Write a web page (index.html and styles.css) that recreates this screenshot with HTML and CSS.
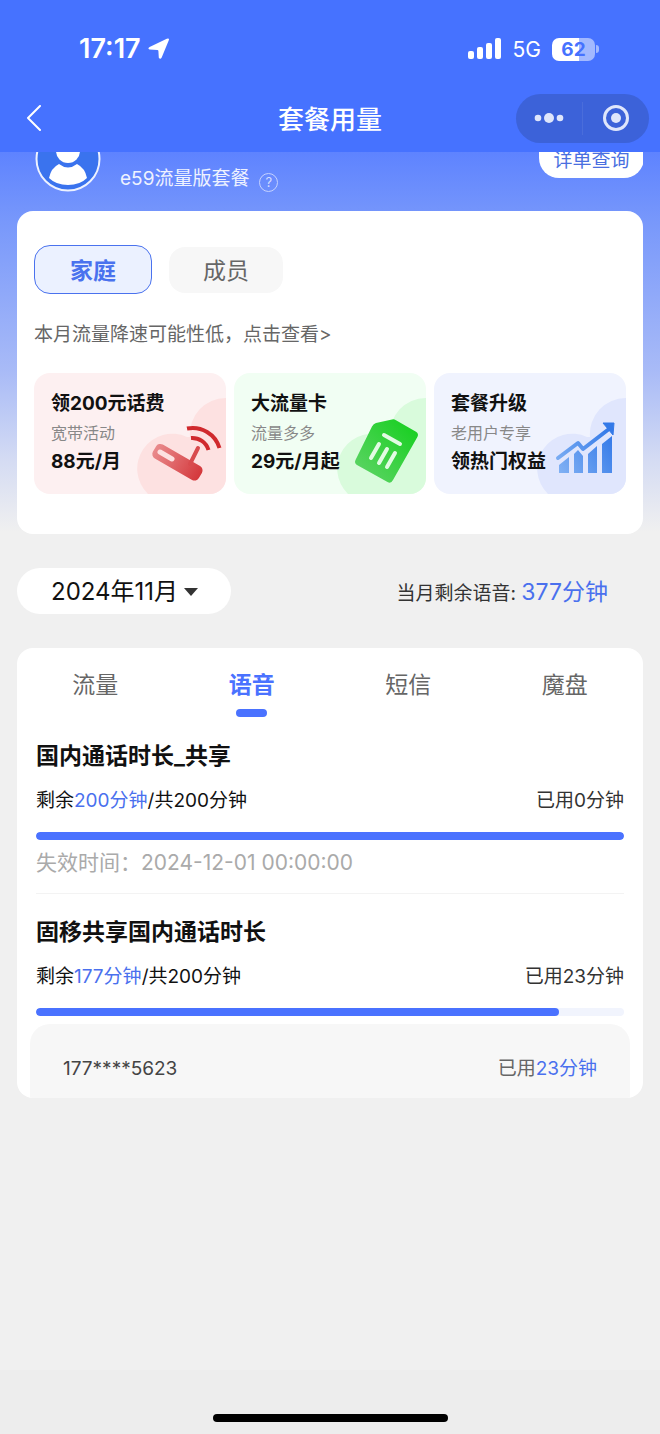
FILE: index.html
```html
<!DOCTYPE html>
<html lang="zh-CN">
<head>
<meta charset="utf-8">
<meta name="viewport" content="width=device-width, initial-scale=1">
<title>套餐用量</title>
<link rel="stylesheet" href="styles.css">
</head>
<body>
<header class="top">
  <div class="status">
    <div class="status-time">
      <span>17:17</span>
      <svg width="22" height="22" viewBox="0 0 22 22" aria-hidden="true"><path d="M20.800 2.200 13.700 19.500q-1.400 2.500-2.900.3L10.400 13q-.1-1-1-1L1.600 11.400q-2.400-.9 0-2.300L18.800.8Q21.600 0 20.800 2.200z" fill="#fff"/></svg>
    </div>
    <div class="status-right">
      <svg width="34" height="22" viewBox="0 0 34 22" fill="#fff" aria-hidden="true"><rect y="13" width="6" height="8" rx="2"/><rect x="9" y="9" width="6" height="12" rx="2"/><rect x="18" y="5" width="6" height="16" rx="2"/><rect x="27" width="6" height="21" rx="2"/></svg>
      <span class="network">5G</span>
      <div class="battery"><span class="battery-body">62</span><span class="battery-tip"></span></div>
    </div>
  </div>
  <div class="nav">
    <button class="back" aria-label="返回"><svg width="16" height="26" viewBox="0 0 16 26" fill="none" stroke="#fff" stroke-width="2" stroke-linecap="round" stroke-linejoin="round"><path d="M14 1 2 13l12 12"/></svg></button>
    <h1 class="nav-title">套餐用量</h1>
    <div class="capsule">
      <button class="capsule-btn" aria-label="更多"><svg width="30" height="12" viewBox="0 0 30 12" fill="#dfe6fb"><circle cx="4" cy="6" r="3.300"/><circle cx="15" cy="6" r="5"/><circle cx="26" cy="6" r="3.300"/></svg></button>
      <button class="capsule-btn capsule-close" aria-label="关闭"><svg width="28" height="28" viewBox="0 0 28 28"><circle cx="14" cy="14" r="11.500" fill="none" stroke="#dfe6fb" stroke-width="3"/><circle cx="14" cy="14" r="5" fill="#dfe6fb"/></svg></button>
    </div>
  </div>
</header>

<main class="content">
  <section class="profile">
    <svg class="avatar" width="66" height="66" viewBox="0 0 66 66" aria-hidden="true"><circle cx="33" cy="33" r="31.500" fill="#3a73ee" stroke="#edf2ff" stroke-width="2"/><circle cx="33" cy="25" r="12" fill="#fff"/><path d="M24 38q9 7 18 0 8 4 10 14-7 7-19 7t-19-7q2-10 10-14z" fill="#fff"/></svg>
    <span class="plan">e59流量版套餐</span>
    <button class="help" aria-label="说明">?</button>
    <button class="bill">详单查询</button>
  </section>

  <section class="card offers">
    <div class="chips">
      <button class="chip chip-active">家庭</button>
      <button class="chip">成员</button>
    </div>
    <a class="notice" href="#">本月流量降速可能性低，点击查看&gt;</a>
    <div class="coupons">
      <a class="coupon coupon-red" href="#">
        <svg class="art" width="90" height="96" viewBox="0 0 90 96" aria-hidden="true">
          <defs><linearGradient id="red" gradientUnits="userSpaceOnUse" x1="15" y1="55" x2="80" y2="55"><stop offset="0" stop-color="#e98a8c"/><stop offset="1" stop-color="#cf2529"/></linearGradient></defs>
          <path class="blob" d="M90 0A36 36 0 0 0 54 39l-3 0A35 35 0 0 0 12 96H90z"/>
          <rect x="15" y="56" width="53" height="16" rx="5" fill="url(#red)" transform="rotate(30 41 64)"/>
          <path d="m24 54 12 7" stroke="#fde1e1" stroke-width="5" stroke-linecap="round"/>
          <path d="m62 50-8 16" stroke="#d84b4e" stroke-width="4" stroke-linecap="round"/>
          <path d="M55 40A17 17 0 0 1 72.500 52M51 30.500A28 28 0 0 1 83.500 50" fill="none" stroke="#d0292d" stroke-width="4"/>
        </svg>
        <strong class="coupon-title">领200元话费</strong><span class="coupon-sub">宽带活动</span><strong class="coupon-title">88元/月</strong>
      </a>
      <a class="coupon coupon-green" href="#">
        <svg class="art" width="90" height="96" viewBox="0 0 90 96" aria-hidden="true">
          <defs><linearGradient id="green" x1="0" y1="1" x2="1" y2="0"><stop offset="0" stop-color="#63d46b"/><stop offset="1" stop-color="#12cf1b"/></linearGradient></defs>
          <path class="blob" d="M90 0A36 36 0 0 0 54 39l-3 0A35 35 0 0 0 12 96H90z"/>
          <path d="m40 25 16-3.500q2-.5 4 .7l20 11.500q3 2 1.500 5L57 82q-2 4-5.500 2L21 67q-3-2-1.500-5L36 28.500Q37.500 25.500 40 25z" fill="url(#green)"/>
          <path d="m48 37 16 9M43 46l-8 14M51 51l-8 14M59 55l-8 14" stroke="#e2fbe3" stroke-width="4" stroke-linecap="round"/>
        </svg>
        <strong class="coupon-title">大流量卡</strong><span class="coupon-sub">流量多多</span><strong class="coupon-title">29元/月起</strong>
      </a>
      <a class="coupon coupon-blue" href="#">
        <svg class="art" width="90" height="96" viewBox="0 0 90 96" aria-hidden="true">
          <defs><linearGradient id="blue" gradientUnits="userSpaceOnUse" x1="20" y1="72" x2="76" y2="35"><stop offset="0" stop-color="#82b2f4"/><stop offset="1" stop-color="#3379e8"/></linearGradient></defs>
          <path class="blob" d="M90 0A36 36 0 0 0 54 39l-3 0A35 35 0 0 0 12 96H90z"/>
          <path d="M23 67 33 59V75H23zM38 56l4-4 5 6V75H38zM52 56l9-8V75H52zM66 46l10-8V75H66z" fill="url(#blue)"/>
          <path d="M22 60 42 45l5 6 26-20" fill="none" stroke="url(#blue)" stroke-width="4" stroke-linecap="round" stroke-linejoin="round"/>
          <path d="m67 25 11 0-1 12z" fill="#3379e8" stroke="#3379e8" stroke-linejoin="round"/>
        </svg>
        <strong class="coupon-title">套餐升级</strong><span class="coupon-sub">老用户专享</span><strong class="coupon-title">领热门权益</strong>
      </a>
    </div>
  </section>

  <div class="summary">
    <button class="month">2024年11月<span class="caret"></span></button>
    <p class="remaining">当月剩余语音: <span class="remaining-value">377分钟</span></p>
  </div>

  <section class="card usage">
    <nav class="tabs">
      <button class="tab">流量</button>
      <button class="tab tab-active">语音</button>
      <button class="tab">短信</button>
      <button class="tab">魔盘</button>
    </nav>
    <article class="item">
      <h2 class="item-title">国内通话时长_共享</h2>
      <div class="item-row"><span>剩余<span class="accent">200分钟</span>/共200分钟</span><span class="used">已用0分钟</span></div>
      <progress class="bar" max="100" value="100" aria-label="国内通话时长_共享"></progress>
      <p class="expiry">失效时间：2024-12-01 00:00:00</p>
    </article>
    <article class="item">
      <h2 class="item-title">固移共享国内通话时长</h2>
      <div class="item-row"><span>剩余<span class="accent">177分钟</span>/共200分钟</span><span class="used">已用23分钟</span></div>
      <progress class="bar" max="100" value="89" aria-label="固移共享国内通话时长"></progress>
    </article>
    <div class="member">
      <span>177****5623</span>
      <span class="member-used">已用<span class="accent">23分钟</span></span>
    </div>
  </section>
</main>

<footer class="bottom"><span class="home"></span></footer>
</body>
</html>
```
FILE: styles.css
```css
* {
  box-sizing: border-box;
}

body {
  margin: 0;
  min-height: 100vh;
  display: flex;
  flex-direction: column;
  background: #f0f0f0;
  color: #111;
  font-family: Inter, "Noto Sans CJK SC", sans-serif;
  font-size: 19px;
  line-height: 28px;
}

button {
  margin: 0;
  padding: 0;
  border: 0;
  background: none;
  color: inherit;
  font: inherit;
}

a {
  color: inherit;
  text-decoration: none;
}

h1, h2, p {
  margin: 0;
}

/* Header */
.top {
  background: #4672ff;
  color: #fff;
}

.status {
  display: flex;
  justify-content: space-between;
  align-items: center;
  height: 84px;
  padding: 14px 61px 0 79px;
}

.status-time {
  display: flex;
  align-items: center;
  gap: 7px;
  font-size: 27px;
  font-weight: 600;
}

.status-right {
  display: flex;
  align-items: center;
  gap: 11px;
}

.network {
  padding-top: 2px;
  font-size: 21px;
}

.battery {
  display: flex;
  align-items: center;
  gap: 1px;
}

.battery-body {
  width: 43px;
  height: 23px;
  border-radius: 7px;
  background: linear-gradient(90deg, #fff 62%, #a3b9ff 62%);
  color: #4672ff;
  font-size: 19px;
  font-weight: 700;
  line-height: 23px;
  text-align: center;
}

.battery-tip {
  width: 3px;
  height: 8px;
  border-radius: 0 3px 3px 0;
  background: #a3b9ff;
}

.nav {
  display: grid;
  grid-template-columns: 1fr auto 1fr;
  align-items: center;
  height: 68px;
  padding: 0 11px 0 26px;
}

.back {
  display: flex;
  justify-self: start;
}

.nav-title {
  padding: 3px 15px 0 0;
  font-size: 26px;
  font-weight: 500;
  line-height: 36px;
}

.capsule {
  display: flex;
  justify-self: end;
  width: 133px;
  height: 49px;
  padding: 8px 0;
  border-radius: 25px;
  background: #3c62d9;
}

.capsule-btn {
  flex: 1;
  display: flex;
  align-items: center;
  justify-content: center;
}

.capsule-close {
  border-left: 1px solid #4a6ddb;
}

/* Profile strip scrolled partly under the header */
.content {
  padding: 0 17px;
  background: linear-gradient(#5e83ff, #7898fb 70px, #a9bbf7 220px, #d5dcf3 310px, #f0f0f0 380px);
}

.profile {
  display: flex;
  align-items: flex-end;
  height: 59px;
  padding: 0 0 19px 18px;
  overflow: hidden;
  color: #fff;
}

.avatar {
  flex: none;
  margin-right: 19px;
}

.plan {
  color: #eef2ff;
  line-height: 26px;
}

.help {
  width: 19px;
  height: 19px;
  margin-left: 10px;
  border: 1px solid #c5d2ff;
  border-radius: 50%;
  color: #d5deff;
  font-size: 13px;
  line-height: 17px;
}

.bill {
  width: 105px;
  height: 46px;
  margin: 0 -1px 14px auto;
  padding-top: 12px;
  border-radius: 20px;
  background: #fff;
  color: #4a6fe0;
}

.card {
  border-radius: 16px;
  background: #fff;
}

/* Offers */
.offers {
  padding: 34px 17px 40px;
}

.chips {
  display: flex;
  align-items: center;
  gap: 17px;
}

.chip {
  width: 114px;
  height: 46px;
  padding-top: 2px;
  border-radius: 16px;
  background: #f7f7f7;
  color: #666;
  font-size: 23px;
}

.chip-active {
  width: 118px;
  height: 49px;
  border: 1px solid #4a72ee;
  background: #ebf1ff;
  color: #4a72ee;
  font-weight: 700;
}

.notice {
  display: block;
  margin: 27px 0 24px;
  color: #666;
}

.coupons {
  display: grid;
  grid-template-columns: repeat(3, 1fr);
  gap: 8px;
}

.coupon {
  position: relative;
  display: flex;
  flex-direction: column;
  height: 121px;
  padding: 17px 0 0 17px;
  border-radius: 16px;
  overflow: hidden;
  white-space: nowrap;
}

.coupon-red {
  background: #fdf0f1;
}

.coupon-green {
  background: #f1fef3;
}

.coupon-blue {
  background: #f0f3fe;
}

.art {
  position: absolute;
  right: 0;
  bottom: 0;
}

.coupon-red .blob {
  fill: #fde1e1;
}

.coupon-green .blob {
  fill: #d9fbdc;
}

.coupon-blue .blob {
  fill: #e0e6fd;
}

.coupon-title {
  position: relative;
  font-weight: 700;
}

.coupon-sub {
  position: relative;
  color: #888;
  font-size: 16px;
  line-height: 30px;
}

/* Month summary */
.summary {
  display: flex;
  align-items: center;
  justify-content: space-between;
  margin: 34px 0;
  padding-right: 35px;
}

.month {
  display: flex;
  align-items: center;
  gap: 6px;
  height: 46px;
  padding: 2px 33px 0 34px;
  border-radius: 23px;
  background: #fff;
  font-size: 24px;
}

.caret {
  border: 7px solid transparent;
  border-top: 8px solid #333;
  border-bottom: 0;
}

.remaining {
  padding-top: 4px;
  color: #333;
}

.remaining-value {
  color: #4a70ee;
  font-size: 23px;
}

/* Usage */
.usage {
  overflow: hidden;
}

.tabs {
  display: grid;
  grid-template-columns: repeat(4, 1fr);
}

.tab {
  display: flex;
  flex-direction: column;
  align-items: center;
  height: 70px;
  padding-top: 21px;
  color: #666;
  font-size: 23px;
  line-height: 32px;
}

.tab-active {
  color: #4a72ff;
  font-weight: 700;
}

.tab-active::after {
  content: "";
  width: 31px;
  height: 8px;
  margin-top: 8px;
  border-radius: 4px;
  background: #4a72ff;
}

.item {
  margin: 0 19px;
  padding-top: 22px;
}

.item-title {
  font-size: 23px;
  font-weight: 700;
  line-height: 32px;
}

.item-row {
  display: flex;
  justify-content: space-between;
  margin-top: 15px;
}

.used {
  color: #333;
}

.accent {
  color: #4a70ee;
}

.bar {
  display: block;
  width: 100%;
  height: 8px;
  margin-top: 17px;
  border: 0;
  border-radius: 4px;
  overflow: hidden;
  appearance: none;
  background: #f1f4fd;
}

.bar::-webkit-progress-bar {
  background: #f1f4fd;
}

.bar::-webkit-progress-value {
  border-radius: 4px;
  background: #4a72ff;
}

.expiry {
  padding: 9px 0 16px;
  border-bottom: 1px solid #f3f3f3;
  color: #aaa;
  font-size: 21px;
}

.member {
  display: flex;
  justify-content: space-between;
  align-items: center;
  height: 74px;
  margin: 8px 13px 0;
  padding: 15px 33px 0;
  border-radius: 20px 20px 0 0;
  background: #f7f7f7;
  color: #444;
}

.member-used {
  color: #666;
}

/* Home indicator */
.bottom {
  display: flex;
  justify-content: center;
  align-items: flex-end;
  height: 64px;
  margin-top: auto;
  padding-bottom: 12px;
  background: #ededed;
}

.home {
  width: 235px;
  height: 8px;
  border-radius: 4px;
  background: #000;
}
```
